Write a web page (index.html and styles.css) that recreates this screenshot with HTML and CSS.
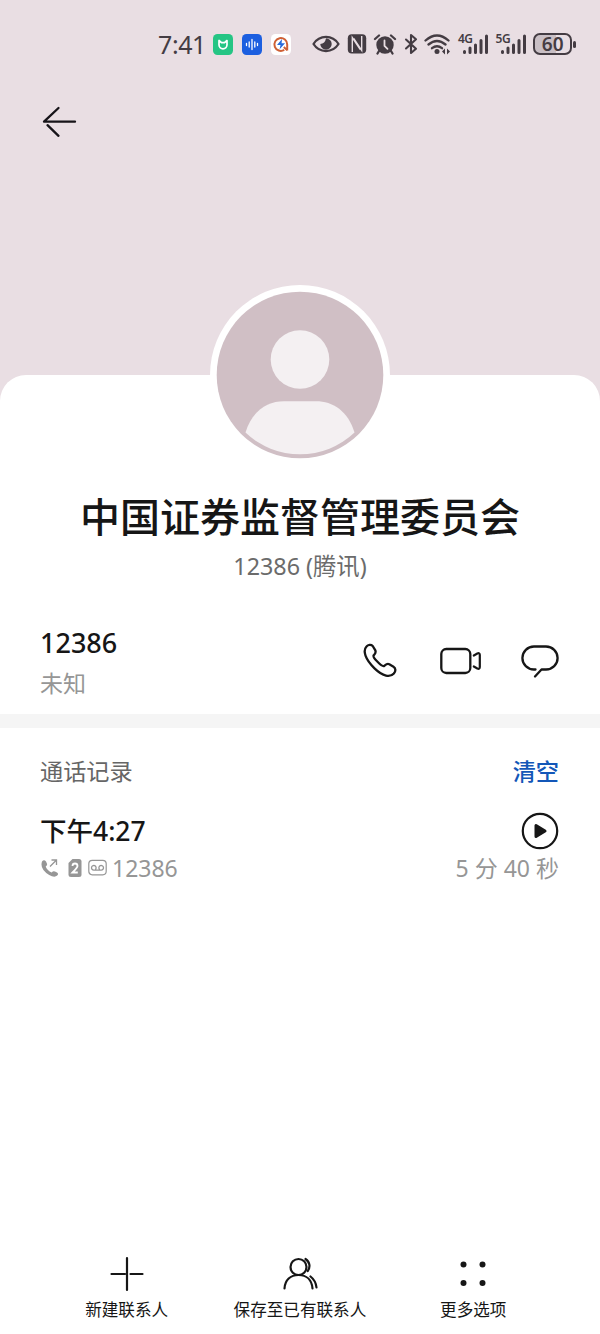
FILE: index.html
```html
<!DOCTYPE html>
<html lang="zh-CN">
<head>
<meta charset="utf-8">
<title>联系人</title>
<link rel="stylesheet" href="styles.css">
</head>
<body>
<main class="screen">
  <header class="hero">
    <div class="status">
      <span class="clock">7:41</span>
      <div class="apps">
        <svg width="20" height="21" viewBox="0 0 20 21"><rect width="20" height="21" rx="4.5" fill="#25c584"/><path d="M6 6.500v4.300a4 4 0 0 0 8 0V6.500L11.500 8.700h-3z" fill="none" stroke="#fff" stroke-width="1.700" stroke-linejoin="round"/></svg>
        <svg width="20" height="21" viewBox="0 0 20 21"><rect width="20" height="21" rx="4.5" fill="#1c5fe0"/><path d="M4.5 9.5v2M7.2 8v5M10 5.5v10M12.8 8v5M15.5 9.5v2" stroke="#fff" stroke-width="1.3" stroke-linecap="round"/></svg>
        <svg width="20" height="21" viewBox="0 0 20 21"><rect width="20" height="21" rx="4.5" fill="#fff"/><path d="M16.2 16.5v-6a6.4 6.4 0 1 0-3 5.4M12.8 13l3.5 3.4" fill="none" stroke="#cf6035" stroke-width="2" stroke-linejoin="round"/><path d="M11 5L6 11h3.5L8.6 15.3 14 9.2h-3.4z" fill="#286bdc"/></svg>
      </div>
      <div class="signals">
        <svg width="28" height="22" viewBox="0 0 28 22"><path d="M1.5 11C7.5 1.6 20.500 1.600 26.500 11C20.500 20.400 7.500 20.400 1.500 11z" fill="none" stroke="#443c43" stroke-width="2.300" stroke-linejoin="round"/><path d="M14 5.300A5.700 5.700 0 1 1 8.300 11q4.700 0 5.700-5.700z" fill="#443c43"/></svg>
        <svg width="20" height="22" viewBox="0 0 20 22"><rect x=".8" y="1.200" width="18.400" height="19.400" rx="4" fill="#443c43"/><path d="M5.300 19V4.500l8 12M14.700 3v14.500l-8-12" stroke="#e9dee3" stroke-width="1.400" fill="none"/></svg>
        <svg width="24" height="22" viewBox="0 0 24 22"><circle cx="12" cy="12" r="8.700" fill="#443c43"/><path d="M2 6l4-3.500M22 6l-4-3.500M6 18l-1.500 2.500M18 18l1.500 2.500" stroke="#443c43" stroke-width="2.300" stroke-linecap="round"/><path d="M11.500 7.500v5.300l3 3" fill="none" stroke="#e9dee3" stroke-width="1.800" stroke-linecap="round"/></svg>
        <svg width="14" height="22" viewBox="0 0 14 22"><path d="M2 6.500l10 9.200-5 4.300V2l5 4.300L2 15.500" fill="none" stroke="#443c43" stroke-width="2.100" stroke-linejoin="round" stroke-linecap="round"/></svg>
        <svg width="27" height="22" viewBox="0 0 27 22"><path d="M1.500 7.500Q13 -2.500 24.500 7.500M4.500 11.500Q13 4.500 21.500 11.500M8 15.200Q13 11.300 18 15.200" fill="none" stroke="#443c43" stroke-width="2.300" stroke-linecap="round"/><circle cx="13" cy="18.500" r="2.500" fill="#443c43"/><path d="M21 15.500v6L18 18.500zM23 15.500v6l3-3z" fill="#443c43"/></svg>
        <span class="cell"><b>4G</b><svg width="31" height="22" viewBox="0 0 31 22"><path d="M6.500 18.500v1M12 15v4.500M17.500 12v7.500M23 7.500v12M28.500 3v16.500" stroke="#443c43" stroke-width="3" stroke-linecap="round"/></svg></span>
        <span class="cell"><b>5G</b><svg width="31" height="22" viewBox="0 0 31 22"><path d="M6.500 18.500v1M12 15v4.500M17.500 12v7.500M23 7.500v12M28.500 3v16.500" stroke="#443c43" stroke-width="3" stroke-linecap="round"/></svg></span>
        <span class="battery"><span class="level">60</span><i class="cap"></i></span>
      </div>
    </div>
    <svg class="back" width="36" height="34" viewBox="0 0 36 34"><path d="M33 16.700H2L16.500 3M5.500 20.200L16.500 30.800" fill="none" stroke="#171419" stroke-width="2.300" stroke-linecap="round" stroke-linejoin="round"/></svg>
  </header>

  <section class="sheet">
    <svg class="avatar" width="180" height="180" viewBox="0 0 180 180">
      <circle cx="90" cy="90" r="90" fill="#fff"/>
      <circle cx="90" cy="90" r="83.300" fill="#d0bfc5"/>
      <circle cx="90" cy="74.500" r="29.300" fill="#f4f0f2"/>
      <path d="M35.500 147.500C42 126 57 116.200 74 116.200h32c17 0 32 9.800 38.500 31.300A79 79 0 0 1 35.500 147.500z" fill="#f4f0f2"/>
    </svg>
    <h1 class="name">中国证券监督管理委员会</h1>
    <p class="origin">12386 (腾讯)</p>

    <div class="number-row">
      <div class="number-text">
        <span class="number">12386</span>
        <span class="place">未知</span>
      </div>
      <div class="actions">
        <svg width="36" height="36" viewBox="0 0 36 36"><path d="M3.500 3.500C5 1.700 8 1.200 9.700 3l2.500 4.200c1.300 2.200-.2 3.600-1.500 5.100-1.200 1.500 1.600 4.200 3.800 6.500 2.500 2.600 5.200 5.300 6.800 4 1.500-1.200 2.700-2.700 5-1.600l4.200 2.500c2.500 1.500 2.300 4.700.4 6.700-3.800 4.200-10.800 3.200-19.400-5.100C2.200 16.200-.5 7.800 3.500 3.500z" fill="none" stroke="#161616" stroke-width="2.300" stroke-linejoin="round"/></svg>
        <svg width="42" height="36" viewBox="0 0 42 36"><rect x="1.300" y="6" width="29" height="24" rx="5" fill="none" stroke="#161616" stroke-width="2.300"/><path d="M33.800 12.500l3.500-2q2.500-1 2.500 1.500v12q0 2.500-2.500 1.500l-3.500-2" fill="none" stroke="#161616" stroke-width="2.200" stroke-linecap="round"/></svg>
        <svg width="38" height="36" viewBox="0 0 38 36"><path d="M14.500 26.500H13A11.600 11.500 0 0 1 13 3.500h12A11.600 11.500 0 0 1 25 26.500h-4.500L14 33.500" fill="none" stroke="#161616" stroke-width="2.300" stroke-linecap="round" stroke-linejoin="round"/></svg>
      </div>
    </div>
    <div class="divider"></div>

    <div class="log-head"><span>通话记录</span><a class="clear">清空</a></div>
    <div class="log-row">
      <span class="time">下午4:27</span>
      <svg width="38" height="38" viewBox="0 0 38 38"><circle cx="19" cy="19" r="17.200" fill="none" stroke="#161616" stroke-width="2.200"/><path d="M15 13.500v11l9-5.500z" fill="#161616" stroke="#161616" stroke-width="3" stroke-linejoin="round"/></svg>
    </div>
    <div class="log-detail">
      <svg class="outgoing" width="18" height="20" viewBox="0 0 18 20"><path d="M1 3.500Q3 .8 5 3.500l1 2.300Q6.500 7.500 4.700 8.500q1.500 4 6 6 1.500-2 3.300-1l2 1q2 1.300.2 3-2.700 2.500-8-.5Q-1.500 11 1 3.500z" fill="#969696"/><path d="M9 8.500L15.500 2M10.500 2h5v5" fill="none" stroke="#969696" stroke-width="1.300"/></svg>
      <svg class="sim" width="14" height="20" viewBox="0 0 14 20"><path d="M4.500 1H11q2.500 0 2.500 2.500v13Q13.500 19 11 19H3Q.5 19 .5 16.500V5z" fill="#969696"/><path d="M4.500 8q0-2.500 2.500-2.500T9.500 8q0 1.500-5 6.500h5.300" fill="none" stroke="#fff" stroke-width="1.800"/></svg>
      <svg class="voicemail" width="19" height="20" viewBox="0 0 19 20"><rect x=".8" y="2.300" width="17.400" height="14.500" rx="3.500" fill="none" stroke="#969696" stroke-width="1.200"/><path d="M5.800 12.100h7.400M5.800 12.100a2.300 2.300 0 1 1 1.900-1v1M13.200 12.100a2.300 2.300 0 1 0-1.900-1v1" fill="none" stroke="#969696" stroke-width="1.300"/></svg>
      <span>12386</span>
      <span class="duration">5 分 40 秒</span>
    </div>
  </section>

  <nav class="toolbar">
    <div class="tool"><svg width="34" height="36" viewBox="0 0 34 36"><path d="M17 2v32M1.500 18H15M20.500 18H32.500" stroke="#161616" stroke-width="2.200" stroke-linecap="round"/></svg>新建联系人</div>
    <div class="tool"><svg width="36" height="36" viewBox="0 0 36 36"><g fill="none" stroke="#161616" stroke-width="2.200" stroke-linecap="round"><circle cx="16.500" cy="11" r="8"/><path d="M2.500 32.500C3 24 8.500 19 16.500 19s13.300 5 14 13.500M23.500 3C28 6 28.500 11 25.800 15M28.500 20.500c3.500 2.700 5.500 6.300 6 11"/></g></svg>保存至已有联系人</div>
    <div class="tool"><svg width="34" height="36" viewBox="0 0 34 36"><g fill="#161616"><circle cx="7.500" cy="8.500" r="3"/><circle cx="26.500" cy="8.500" r="3"/><circle cx="7.500" cy="27" r="3"/><circle cx="26.500" cy="27" r="3"/></g></svg>更多选项</div>
  </nav>
</main>
</body>
</html>
```
FILE: styles.css
```css
* { box-sizing: border-box; }
body {
  margin: 0;
  background: #fff;
  color: #161616;
  font-family: "Noto Sans", "Noto Sans CJK SC", sans-serif;
}
svg { display: block; flex: none; }
h1, p { margin: 0; }

.screen {
  width: 600px;
  height: 1334px;
  display: flex;
  flex-direction: column;
  background: linear-gradient(#e9dee3 420px, #fff 420px);
}
.hero { height: 375px; flex: none; }
.status {
  height: 88px;
  padding-left: 158px;
  display: flex;
  align-items: center;
  color: #443c43;
}
.clock { width: 55px; font-size: 25px; line-height: 30px; letter-spacing: -0.4px; }
.apps { display: flex; gap: 9px; }
.signals { display: flex; align-items: center; margin-left: 21px; gap: 6.6px; }
.cell { position: relative; }
.cell b {
  position: absolute;
  left: 0;
  top: 0;
  font-size: 12px;
  line-height: 12px;
  font-weight: 600;
  letter-spacing: -0.5px;
}
.battery { display: flex; align-items: center; gap: 1px; }
.level {
  width: 39px;
  height: 22px;
  border: 2px solid #443c43;
  border-radius: 7px;
  background: linear-gradient(90deg, #c9bfc5 60%, #e9dee3 60%);
  font-size: 19px;
  font-weight: 600;
  line-height: 18px;
  text-align: center;
}
.cap { width: 3px; height: 7px; border-radius: 2px; background: #443c43; }
.back { margin: 17px 0 0 42px; }

.sheet {
  flex: 1;
  border-radius: 26px 26px 0 0;
  background: #fff;
}
.avatar { margin: -90px auto 0; }
.name {
  margin-top: 22px;
  text-align: center;
  font-size: 40px;
  font-weight: 500;
  line-height: 60px;
}
.origin {
  margin-top: 4px;
  text-align: center;
  color: #6b6b6b;
  font-size: 23.3px;
  line-height: 30px;
}
.number-row {
  margin-top: 42px;
  height: 91px;
  padding: 0 41px 0 40px;
  display: flex;
  justify-content: space-between;
}
.number-text { display: flex; flex-direction: column; }
.number { font-size: 27px; font-weight: 500; line-height: 40px; }
.place { font-size: 23px; line-height: 40px; color: #969696; }
.actions { display: flex; gap: 41px; padding-top: 20px; }
.actions svg:nth-child(2) { margin-right: -2px; }
.divider { height: 14px; background: #f5f5f5; }
.log-head {
  padding: 27px 41px 0 40px;
  display: flex;
  justify-content: space-between;
  color: #666;
  font-size: 23.2px;
  line-height: 32px;
}
.clear { color: #1357b8; font-weight: 500; }
.log-row {
  margin-top: 25px;
  height: 38px;
  padding: 0 41px 0 40px;
  display: flex;
  align-items: center;
  justify-content: space-between;
}
.time { font-size: 26.5px; font-weight: 500; line-height: 38px; }
.log-detail {
  height: 36px;
  padding: 0 41px;
  display: flex;
  align-items: center;
  color: #969696;
  font-size: 23px;
  line-height: 36px;
}
.sim { margin-left: 9px; }
.voicemail { margin: 0 5px 0 6px; }
.duration { margin-left: auto; }

.toolbar {
  height: 78px;
  padding: 0 40px;
  display: grid;
  grid-template-columns: repeat(3, 173.3px);
  background: #fff;
}
.tool {
  display: flex;
  flex-direction: column;
  align-items: center;
  font-size: 16.6px;
  line-height: 35px;
  white-space: nowrap;
}
```
